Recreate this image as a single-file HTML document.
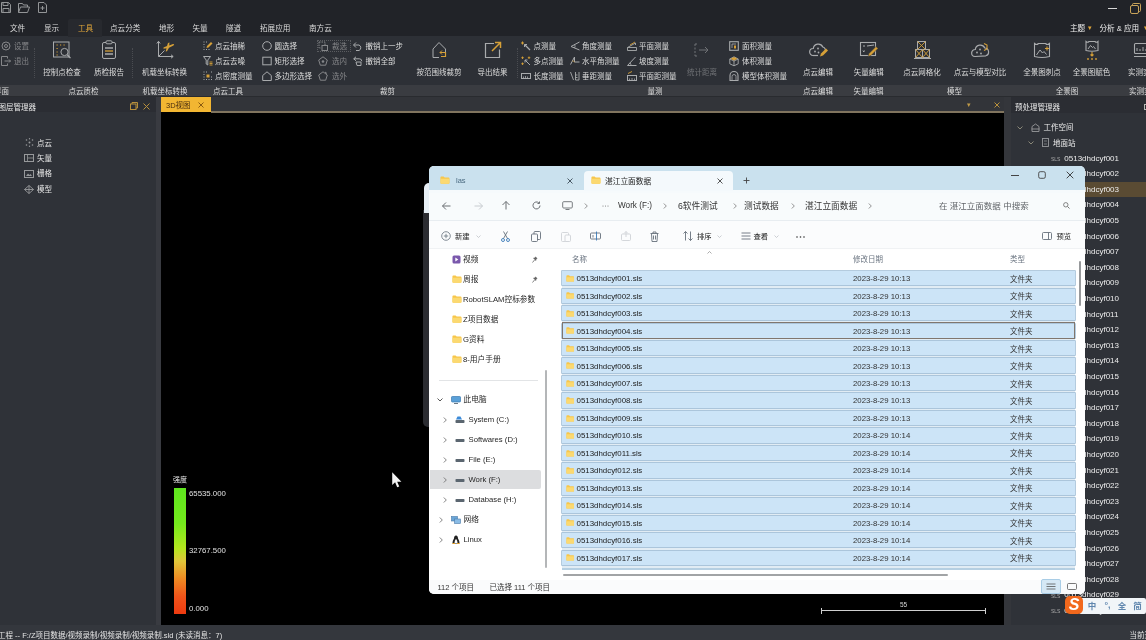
<!DOCTYPE html>
<html lang="zh-CN"><head><meta charset="utf-8"><title>3D视图</title>
<style>
html,body{margin:0;padding:0}
body{width:1146px;height:640px;overflow:hidden;position:relative;background:#000;font-family:"Liberation Sans","Noto Sans CJK SC",sans-serif;font-size:7.5px;-webkit-font-smoothing:antialiased}
#root{position:absolute;left:0;top:0;width:1146px;height:640px;overflow:hidden;will-change:transform}
.t{position:absolute;white-space:nowrap;display:block}
.b{position:absolute;display:block}
svg{overflow:visible}
</style></head><body>
<div id="root">
<div class="b" style="left:0.0px;top:0.0px;width:1146.0px;height:37.0px;background:#212328;"></div>
<div class="b" style="left:0.0px;top:36.0px;width:1146.0px;height:49.0px;background:#2d3036;"></div>
<div class="b" style="left:0.0px;top:85.0px;width:1146.0px;height:11.0px;background:#3a3c41;"></div>
<div class="b" style="left:0.0px;top:96.0px;width:1146.0px;height:1.0px;background:#292b2f;"></div>
<div class="b" style="left:0.0px;top:97.0px;width:1146.0px;height:15.5px;background:#2b2d33;"></div>
<div class="b" style="left:0.0px;top:112.0px;width:157.0px;height:513.0px;background:#2f3238;"></div>
<div class="b" style="left:155.5px;top:97.0px;width:5.5px;height:528.0px;background:#393b41;"></div>
<div class="b" style="left:161.0px;top:112.0px;width:843.0px;height:513.5px;background:#000;"></div>
<div class="b" style="left:161.0px;top:97.0px;width:843.0px;height:14.0px;background:#323439;"></div>
<div class="b" style="left:211.0px;top:111.0px;width:793.0px;height:2.0px;background:#80745e;"></div>
<div class="b" style="left:1004.0px;top:97.0px;width:7.0px;height:528.0px;background:#34363b;"></div>
<div class="b" style="left:1011.0px;top:112.5px;width:135.0px;height:512.5px;background:#2f3238;"></div>
<div class="b" style="left:1011.0px;top:97.0px;width:135.0px;height:15.5px;background:#2b2d33;"></div>
<div class="b" style="left:1144.0px;top:104.0px;width:3.0px;height:6.0px;background:transparent;border:1px solid #b9b9b4;box-sizing:border-box"></div>
<div class="b" style="left:0.0px;top:625.0px;width:1146.0px;height:15.0px;background:#34373d;"></div>
<svg class="b" style="left:1.0px;top:2.3px;" width="10" height="11" viewBox="0 0 10 11" fill="none"><path d="M0.5 0.5h7l2 2v8h-9z M2 0.5v3h5v-3 M2 10.5v-4h6v4" stroke="#939597" stroke-width="1"/></svg>
<svg class="b" style="left:18.0px;top:2.8px;" width="12" height="10" viewBox="0 0 12 10" fill="none"><path d="M0.5 9.5v-9h4l1 1.5h4v2 M0.5 9.5l2-5.5h9l-2 5.5z" stroke="#939597" stroke-width="1"/></svg>
<svg class="b" style="left:38.0px;top:2.3px;" width="9" height="11" viewBox="0 0 9 11" fill="none"><path d="M0.5 0.5h5.5l2.5 2.5v7.5h-8z M2.5 6h4 M4.5 4v4" stroke="#939597" stroke-width="1"/></svg>
<div class="b" style="left:1108.0px;top:8.0px;width:9.0px;height:1.0px;background:#d8d8d8;"></div>
<svg class="b" style="left:1130.0px;top:2.5px;" width="11" height="11" viewBox="0 0 11 11" fill="none"><rect x="0.5" y="2.5" width="8" height="8" rx="1.5" stroke="#c9a45a" stroke-width="1"/><path d="M2.5 2.5v-1a1 1 0 0 1 1-1h6a1 1 0 0 1 1 1v6a1 1 0 0 1-1 1h-1" stroke="#c9a45a" stroke-width="1"/></svg>
<div class="b" style="left:68.0px;top:19.0px;width:34.0px;height:18.0px;background:#27292e;border-radius:2px 2px 0 0"></div>
<span class="t" style="left:10.0px;top:23.0px;font-size:7.6px;line-height:12px;color:#dcdcdc;">文件</span>
<span class="t" style="left:44.0px;top:23.0px;font-size:7.6px;line-height:12px;color:#dcdcdc;">显示</span>
<span class="t" style="left:78.0px;top:23.0px;font-size:7.6px;line-height:12px;color:#e0a63a;">工具</span>
<span class="t" style="left:110.0px;top:23.0px;font-size:7.6px;line-height:12px;color:#dcdcdc;">点云分类</span>
<span class="t" style="left:159.0px;top:23.0px;font-size:7.6px;line-height:12px;color:#dcdcdc;">地形</span>
<span class="t" style="left:192.5px;top:23.0px;font-size:7.6px;line-height:12px;color:#dcdcdc;">矢量</span>
<span class="t" style="left:226.0px;top:23.0px;font-size:7.6px;line-height:12px;color:#dcdcdc;">隧道</span>
<span class="t" style="left:260.0px;top:23.0px;font-size:7.6px;line-height:12px;color:#dcdcdc;">拓展应用</span>
<span class="t" style="left:309.0px;top:23.0px;font-size:7.6px;line-height:12px;color:#dcdcdc;">南方云</span>
<span class="t" style="left:1070.0px;top:23.0px;font-size:7.6px;line-height:12px;color:#f0f0f0;">主题</span>
<span class="t" style="left:1088.0px;top:22.0px;font-size:7px;line-height:12px;color:#e0a63a;">▾</span>
<span class="t" style="left:1099.5px;top:23.0px;font-size:7.6px;line-height:12px;color:#f0f0f0;">分析 &amp; 应用</span>
<span class="t" style="left:1144.0px;top:22.0px;font-size:7px;line-height:12px;color:#e0a63a;">▾</span>
<svg class="b" style="left:1.0px;top:41.0px;" width="10" height="10" viewBox="0 0 10 10" fill="none"><circle cx="5" cy="5" r="4" stroke="#858689"/><circle cx="5" cy="5" r="1.500" stroke="#858689"/></svg>
<span class="t" style="left:14.0px;top:41.0px;font-size:7.5px;line-height:12px;color:#858689;">设置</span>
<svg class="b" style="left:1.0px;top:56.0px;" width="10" height="10" viewBox="0 0 10 10" fill="none"><path d="M6.500 2.500v-2h-6v9h6v-2" stroke="#858689"/><path d="M3.500 5h6M8 3.500l1.500 1.500-1.500 1.500" stroke="#858689"/></svg>
<span class="t" style="left:14.0px;top:56.0px;font-size:7.5px;line-height:12px;color:#858689;">退出</span>
<div class="b" style="left:34.0px;top:48.0px;width:1.0px;height:30.0px;background:transparent;border-left:1px dotted #4a4c51;width:0"></div>
<svg class="b" style="left:52.0px;top:40.0px;" width="20" height="20" viewBox="0 0 20 20" fill="none"><rect x="1.500" y="2" width="15.500" height="15" stroke="#a9abad"/><path d="M4.500 5h1.200M8 5h1.200M11.500 5h1.200M4.500 8.500h1.200M4.500 12h1.200M4.500 15h1.200" stroke="#d6a038" stroke-width="1.100"/><circle cx="12.500" cy="12" r="3.600" stroke="#a9abad" fill="#2d3036"/><path d="M15.200 14.800l3.300 3.300" stroke="#a9abad" stroke-width="1.300"/></svg>
<span class="t" style="left:-88.0px;width:300px;text-align:center;top:67.0px;font-size:7.5px;line-height:12px;color:#dcdcdc;">控制点检查</span>
<svg class="b" style="left:99.0px;top:40.0px;" width="20" height="20" viewBox="0 0 20 20" fill="none"><rect x="3.5" y="2.5" width="13" height="16" rx="1.5" stroke="#a9abad"/><rect x="7" y="0.8" width="6" height="3" rx="1" stroke="#a9abad" fill="#2d3036"/><path d="M6 8h8M6 14h8" stroke="#a9abad" stroke-width="1.3"/><path d="M6 11h8" stroke="#d6a038" stroke-width="1.3"/></svg>
<span class="t" style="left:-41.0px;width:300px;text-align:center;top:67.0px;font-size:7.5px;line-height:12px;color:#dcdcdc;">质检报告</span>
<div class="b" style="left:132.0px;top:48.0px;width:1.0px;height:30.0px;background:transparent;border-left:1px dotted #4a4c51;width:0"></div>
<svg class="b" style="left:154.5px;top:40.0px;" width="20" height="20" viewBox="0 0 20 20" fill="none"><path d="M3.500 1.500v15h14.500M1.800 3.500l1.700-2.200 1.700 2.200M16 14.800l2.200 1.700-2.200 1.700M3.500 16.500l6-6" stroke="#a9abad"/><path d="M8.500 7.500l3.500-1.500 1-3 1.500-.5-.3 3 3.800-1.500 1.200.3-.7 1.200-4.500 2.300-2 3.500-1.300.3.800-3.300-3 .5z" fill="#d6a038"/></svg>
<span class="t" style="left:14.5px;width:300px;text-align:center;top:67.0px;font-size:7.5px;line-height:12px;color:#dcdcdc;">机载坐标转换</span>
<svg class="b" style="left:202.5px;top:41.0px;" width="10" height="10" viewBox="0 0 10 10" fill="none"><path d="M0.500 1h1M3 1h1M0.500 3.500h1M0.500 6h1M0.500 8.500h1M3 8.500h1M5.500 8.500h1" stroke="#a9abad" stroke-width="1.200"/><path d="M3.500 7l.5-2 4-4 1.500 1.500-4 4z" fill="#d6a038"/></svg>
<span class="t" style="left:215.0px;top:41.0px;font-size:7.5px;line-height:12px;color:#dcdcdc;">点云抽稀</span>
<svg class="b" style="left:202.5px;top:56.0px;" width="10" height="10" viewBox="0 0 10 10" fill="none"><path d="M0.500 0.500h7l-2.700 3.500v5l-1.600-1v-4z" stroke="#a9abad"/><path d="M6.500 6h3M6.500 7.500h3M6.500 9h3" stroke="#d6a038" stroke-width=".9"/></svg>
<span class="t" style="left:215.0px;top:56.0px;font-size:7.5px;line-height:12px;color:#dcdcdc;">点云去噪</span>
<svg class="b" style="left:202.5px;top:71.0px;" width="10" height="10" viewBox="0 0 10 10" fill="none"><path d="M0.500 1h1M3 1h1M0.500 3.500h1M0.500 6h1M0.500 8.500h1M3 8.500h1M5.500 8.500h1M8 8.500h1M8 1h1M8 6h1" stroke="#a9abad" stroke-width="1.200"/><path d="M3.500 3.500h3v3h-3z" fill="#d6a038"/></svg>
<span class="t" style="left:215.0px;top:71.0px;font-size:7.5px;line-height:12px;color:#dcdcdc;">点密度测量</span>
<svg class="b" style="left:262.0px;top:41.0px;" width="10" height="10" viewBox="0 0 10 10" fill="none"><circle cx="5" cy="5" r="4.300" stroke="#a9abad"/></svg>
<span class="t" style="left:274.5px;top:41.0px;font-size:7.5px;line-height:12px;color:#dcdcdc;">圆选择</span>
<svg class="b" style="left:262.0px;top:56.0px;" width="10" height="10" viewBox="0 0 10 10" fill="none"><rect x="0.800" y="1.200" width="8.400" height="7.600" stroke="#a9abad"/></svg>
<span class="t" style="left:274.5px;top:56.0px;font-size:7.5px;line-height:12px;color:#dcdcdc;">矩形选择</span>
<svg class="b" style="left:262.0px;top:71.0px;" width="10" height="10" viewBox="0 0 10 10" fill="none"><path d="M5 0.800l4.300 3.700v5h-8.600v-5z" stroke="#a9abad"/></svg>
<span class="t" style="left:274.5px;top:71.0px;font-size:7.5px;line-height:12px;color:#dcdcdc;">多边形选择</span>
<svg class="b" style="left:318.0px;top:41.0px;" width="10" height="10" viewBox="0 0 10 10" fill="none"><path d="M1 1h6v3M1 1v6h2" stroke="#858689" stroke-dasharray="1.500 1"/><rect x="4" y="4.500" width="5.500" height="5" stroke="#858689"/></svg>
<span class="t" style="left:332.0px;top:41.0px;font-size:7.5px;line-height:12px;color:#858689;">裁选</span>
<svg class="b" style="left:318.0px;top:56.0px;" width="10" height="10" viewBox="0 0 10 10" fill="none"><path d="M5 0.800l4.300 3.200-1.600 5.200h-5.400l-1.600-5.200z" stroke="#858689"/><circle cx="5" cy="5.500" r="1.300" fill="#858689"/></svg>
<span class="t" style="left:332.0px;top:56.0px;font-size:7.5px;line-height:12px;color:#858689;">选内</span>
<svg class="b" style="left:318.0px;top:71.0px;" width="10" height="10" viewBox="0 0 10 10" fill="none"><path d="M5 0.800l4.300 3.200-1.600 5.200h-5.400l-1.600-5.200z" stroke="#858689"/><path d="M7 1l2 1.500" stroke="#858689"/></svg>
<span class="t" style="left:332.0px;top:71.0px;font-size:7.5px;line-height:12px;color:#858689;">选外</span>
<div class="b" style="left:317.0px;top:40.0px;width:34.0px;height:11.5px;background:transparent;border:1px dotted #5a5c60;box-sizing:border-box"></div>
<svg class="b" style="left:353.0px;top:41.0px;" width="10" height="10" viewBox="0 0 10 10" fill="none"><path d="M3 1.500l-2.500 2.500 2.500 2.500M0.800 4h5.200a3 3 0 0 1 0 5.500h-3" stroke="#a9abad"/></svg>
<span class="t" style="left:365.5px;top:41.0px;font-size:7.5px;line-height:12px;color:#dcdcdc;">撤销上一步</span>
<svg class="b" style="left:353.0px;top:56.0px;" width="10" height="10" viewBox="0 0 10 10" fill="none"><path d="M3 0.800l-2.300 2 2.300 2M0.800 2.800h5.500a2.500 2.500 0 0 1 2.500 2.500" stroke="#a9abad"/><path d="M3 6h5v3.500h-4z" stroke="#a9abad"/></svg>
<span class="t" style="left:365.5px;top:56.0px;font-size:7.5px;line-height:12px;color:#dcdcdc;">撤销全部</span>
<svg class="b" style="left:429.0px;top:40.0px;" width="20" height="20" viewBox="0 0 20 20" fill="none"><path d="M4 17.5v-8.5l6-6.5 6.500 6.5v3" stroke="#a9abad"/><path d="M4 17.5h6" stroke="#a9abad"/><path d="M11 12.5h5.500v4h-4.500" stroke="#d6a038" stroke-width="1.2"/><path d="M13 10.5l-2 2 2 2" stroke="#d6a038"/></svg>
<span class="t" style="left:289.0px;width:300px;text-align:center;top:67.0px;font-size:7.5px;line-height:12px;color:#dcdcdc;">按范围线裁剪</span>
<svg class="b" style="left:482.5px;top:40.0px;" width="20" height="20" viewBox="0 0 20 20" fill="none"><path d="M11 3.500h-8.500v14h14v-8" stroke="#a9abad" stroke-width="1.2"/><path d="M9 11l8.500-8.500M12 2.500h5.500v5.500" stroke="#d6a038" stroke-width="1.5"/></svg>
<span class="t" style="left:342.5px;width:300px;text-align:center;top:67.0px;font-size:7.5px;line-height:12px;color:#dcdcdc;">导出结果</span>
<div class="b" style="left:517.0px;top:48.0px;width:1.0px;height:30.0px;background:transparent;border-left:1px dotted #4a4c51;width:0"></div>
<svg class="b" style="left:520.5px;top:41.0px;" width="10" height="10" viewBox="0 0 10 10" fill="none"><path d="M1.500 0.500v3M0 2h3" stroke="#d6a038"/><path d="M3.500 3.500l5.500 5.500" stroke="#a9abad" stroke-width="1.300"/><path d="M3.500 6v-2.500h2.500" stroke="#a9abad"/></svg>
<span class="t" style="left:533.5px;top:41.0px;font-size:7.5px;line-height:12px;color:#dcdcdc;">点测量</span>
<svg class="b" style="left:520.5px;top:56.0px;" width="10" height="10" viewBox="0 0 10 10" fill="none"><path d="M1.500 0.500v2.500M0.300 1.700h2.500M8 0.500v2.500M6.800 1.700h2.500M1.500 6.500v2.500M0.300 7.700h2.500" stroke="#d6a038" stroke-width=".9"/><path d="M4 4l5 5M4 6.500v-2.500h2.500" stroke="#a9abad"/></svg>
<span class="t" style="left:533.5px;top:56.0px;font-size:7.5px;line-height:12px;color:#dcdcdc;">多点测量</span>
<svg class="b" style="left:520.5px;top:71.0px;" width="10" height="10" viewBox="0 0 10 10" fill="none"><rect x="0.500" y="2.500" width="9" height="5" stroke="#a9abad"/><path d="M2.500 7.500v-2M4.500 7.500v-2.500M6.500 7.500v-2" stroke="#a9abad" stroke-width=".8"/></svg>
<span class="t" style="left:533.5px;top:71.0px;font-size:7.5px;line-height:12px;color:#dcdcdc;">长度测量</span>
<svg class="b" style="left:570.0px;top:41.0px;" width="10" height="10" viewBox="0 0 10 10" fill="none"><path d="M9.500 1l-8.500 4.500 8.500 3.500" stroke="#a9abad"/><path d="M4.500 3.500a3 3 0 0 1 0 3.500" stroke="#a9abad" stroke-width=".8"/></svg>
<span class="t" style="left:582.0px;top:41.0px;font-size:7.5px;line-height:12px;color:#dcdcdc;">角度测量</span>
<svg class="b" style="left:570.0px;top:56.0px;" width="10" height="10" viewBox="0 0 10 10" fill="none"><path d="M0.500 8.500l4-7.500v5h5" stroke="#a9abad"/><path d="M2.500 5a2.500 2.500 0 0 1 2 1" stroke="#d6a038" stroke-width=".8"/></svg>
<span class="t" style="left:582.0px;top:56.0px;font-size:7.5px;line-height:12px;color:#dcdcdc;">水平角测量</span>
<svg class="b" style="left:570.0px;top:71.0px;" width="10" height="10" viewBox="0 0 10 10" fill="none"><path d="M0.500 1l3 8M5.500 1v8h3.500v-8M5.500 4h2M5.500 6.500h2" stroke="#a9abad" stroke-width=".9"/></svg>
<span class="t" style="left:582.0px;top:71.0px;font-size:7.5px;line-height:12px;color:#dcdcdc;">垂距测量</span>
<svg class="b" style="left:626.5px;top:41.0px;" width="10" height="10" viewBox="0 0 10 10" fill="none"><path d="M0.500 9.500v-3l8-4.500v2M0.500 6.500h9v3h-9" stroke="#a9abad" stroke-width=".9"/><path d="M3 4l5-3" stroke="#d6a038" stroke-width=".9"/></svg>
<span class="t" style="left:639.0px;top:41.0px;font-size:7.5px;line-height:12px;color:#dcdcdc;">平面测量</span>
<svg class="b" style="left:626.5px;top:56.0px;" width="10" height="10" viewBox="0 0 10 10" fill="none"><path d="M0.500 9.500l8-8.500M0.500 9.500h9" stroke="#a9abad"/><path d="M4 9.500a3.500 3.500 0 0 0-1-2.700" stroke="#a9abad" stroke-width=".8"/></svg>
<span class="t" style="left:639.0px;top:56.0px;font-size:7.5px;line-height:12px;color:#dcdcdc;">坡度测量</span>
<svg class="b" style="left:626.5px;top:71.0px;" width="10" height="10" viewBox="0 0 10 10" fill="none"><rect x="0.500" y="4.500" width="9" height="5" stroke="#a9abad"/><path d="M2.500 9.500v-2M5 9.500v-2.500M7.500 9.500v-2" stroke="#a9abad" stroke-width=".8"/><path d="M1 2.500l4-2" stroke="#d6a038" stroke-width=".9"/></svg>
<span class="t" style="left:639.0px;top:71.0px;font-size:7.5px;line-height:12px;color:#dcdcdc;">平面距测量</span>
<svg class="b" style="left:692.0px;top:40.0px;" width="20" height="20" viewBox="0 0 20 20" fill="none"><path d="M3 4v12M3 4h3M3 16h3" stroke="#707276" stroke-dasharray="2 1.5"/><path d="M7 10h9M13 7l3 3-3 3" stroke="#707276"/></svg>
<span class="t" style="left:552.0px;width:300px;text-align:center;top:67.0px;font-size:7.5px;line-height:12px;color:#707276;">统计距离</span>
<svg class="b" style="left:729.0px;top:41.0px;" width="10" height="10" viewBox="0 0 10 10" fill="none"><rect x="0.700" y="0.700" width="8.600" height="8.600" stroke="#a9abad" stroke-width="1.100"/><path d="M3 3h4M3 3v4" stroke="#a9abad" stroke-width=".8"/><path d="M5 4.500h2v3h-2z" fill="#d6a038"/></svg>
<span class="t" style="left:742.0px;top:41.0px;font-size:7.5px;line-height:12px;color:#dcdcdc;">面积测量</span>
<svg class="b" style="left:729.0px;top:56.0px;" width="10" height="10" viewBox="0 0 10 10" fill="none"><path d="M0.800 3l4.200-2.200 4.200 2.200v4.800l-4.200 2-4.200-2zM0.800 3l4.200 2 4.200-2M5 5v4.800" stroke="#a9abad" stroke-width=".9"/><path d="M1.500 2.800l3.500-1.800 3.500 1.800-3.500 1.700z" fill="#d6a038"/></svg>
<span class="t" style="left:742.0px;top:56.0px;font-size:7.5px;line-height:12px;color:#dcdcdc;">体积测量</span>
<svg class="b" style="left:729.0px;top:71.0px;" width="10" height="10" viewBox="0 0 10 10" fill="none"><path d="M1 9.500v-5a4 4 0 0 1 8 0v5z" stroke="#a9abad" stroke-width="1.100"/><path d="M3 9v-3.500a2 2 0 0 1 4 0v3.500" stroke="#a9abad" stroke-width=".8"/></svg>
<span class="t" style="left:742.0px;top:71.0px;font-size:7.5px;line-height:12px;color:#dcdcdc;">模型体积测量</span>
<svg class="b" style="left:808.0px;top:40.0px;" width="20" height="20" viewBox="0 0 20 20" fill="none"><path d="M5 15.500a3.500 3.500 0 0 1 .3-7 5 5 0 0 1 9.500-1.500 4 4 0 0 1 2.700 5" stroke="#a9abad" stroke-width="1.2"/><path d="M5 15.500h5" stroke="#a9abad" stroke-width="1.2"/><circle cx="7" cy="11.500" r=".9" fill="#a9abad"/><circle cx="10" cy="8.500" r=".9" fill="#a9abad"/><circle cx="10.500" cy="12.500" r=".9" fill="#a9abad"/><path d="M12 16.500l1-3 5-5 2 2-5 5z" fill="#d6a038"/></svg>
<span class="t" style="left:668.0px;width:300px;text-align:center;top:67.0px;font-size:7.5px;line-height:12px;color:#dcdcdc;">点云编辑</span>
<svg class="b" style="left:858.7px;top:40.0px;" width="20" height="20" viewBox="0 0 20 20" fill="none"><rect x="1.500" y="2.500" width="15" height="13" stroke="#a9abad" stroke-width="1.100"/><path d="M4 6h2M4 12l1.500-1.500M4 10.500l1.500 1.500" stroke="#a9abad"/><path d="M9 16.500l1-3 7-7 2 2-7 7z" fill="#d6a038" stroke="#2d3036" stroke-width=".5"/><path d="M8 6l7-1" stroke="#a9abad"/></svg>
<span class="t" style="left:718.7px;width:300px;text-align:center;top:67.0px;font-size:7.5px;line-height:12px;color:#dcdcdc;">矢量编辑</span>
<svg class="b" style="left:912.0px;top:40.0px;" width="20" height="20" viewBox="0 0 20 20" fill="none"><rect x="5.500" y="1.500" width="8" height="8" stroke="#a9abad"/><rect x="3.500" y="9.500" width="7" height="8" stroke="#a9abad"/><rect x="10.500" y="9.500" width="7" height="8" stroke="#a9abad"/><path d="M5.500 1.500l8 8M13.500 1.500l-8 8M3.500 9.500l7 8M10.500 9.500l-7 8M10.500 9.500l7 8M17.500 9.500l-7 8" stroke="#d6a038" stroke-width=".9"/><path d="M2 18.500h17" stroke="#a9abad"/></svg>
<span class="t" style="left:772.0px;width:300px;text-align:center;top:67.0px;font-size:7.5px;line-height:12px;color:#dcdcdc;">点云网格化</span>
<svg class="b" style="left:970.0px;top:40.0px;" width="20" height="20" viewBox="0 0 20 20" fill="none"><path d="M5 16.500a3.500 3.500 0 0 1 .3-7 5 5 0 0 1 9.500-1.500 4 4 0 0 1 1 7.800z" stroke="#a9abad" stroke-width="1.200"/><circle cx="7" cy="12.500" r=".9" fill="#a9abad"/><circle cx="10" cy="9.500" r=".9" fill="#a9abad"/><circle cx="11" cy="13.500" r=".9" fill="#a9abad"/><path d="M14 3.500l3 1.500v4l-3 1.500" stroke="#d6a038" stroke-width="1.100"/></svg>
<span class="t" style="left:830.0px;width:300px;text-align:center;top:67.0px;font-size:7.5px;line-height:12px;color:#dcdcdc;">点云与模型对比</span>
<svg class="b" style="left:1032.0px;top:40.0px;" width="20" height="20" viewBox="0 0 20 20" fill="none"><path d="M2.500 3.500q2 2 4 0h7q2 2 4 0v13q-7.500 2-15 0z" stroke="#a9abad" stroke-width="1.100"/><path d="M4.500 15l3.500-5 2.500 3 1.500-1.500 2.500 3" stroke="#a9abad"/><path d="M13 8.500h4M15 6.500v4" stroke="#d6a038" stroke-width="1.100"/></svg>
<span class="t" style="left:892.0px;width:300px;text-align:center;top:67.0px;font-size:7.5px;line-height:12px;color:#dcdcdc;">全景图刺点</span>
<svg class="b" style="left:1081.5px;top:40.0px;" width="20" height="20" viewBox="0 0 20 20" fill="none"><path d="M4 1.500q1.500 1.500 3 0h6q1.500 1.500 3 0v9q-6 1.500-12 0z" stroke="#a9abad" stroke-width="1.100"/><path d="M6 9l2.500-3.500 2 2 1-1 2 2.500" stroke="#a9abad"/><path d="M10 12v4M8.500 14.500l1.500 1.500 1.500-1.500" stroke="#d6a038" stroke-width="1.100"/><circle cx="6" cy="19" r=".9" fill="#d6a038"/><circle cx="10" cy="19" r=".9" fill="#d6a038"/><circle cx="14" cy="19" r=".9" fill="#d6a038"/></svg>
<span class="t" style="left:941.5px;width:300px;text-align:center;top:67.0px;font-size:7.5px;line-height:12px;color:#dcdcdc;">全景图赋色</span>
<svg class="b" style="left:1133.0px;top:40.0px;" width="20" height="20" viewBox="0 0 20 20" fill="none"><rect x="1.500" y="3.500" width="17" height="10" rx="1" stroke="#a9abad" stroke-width="1.100"/><path d="M4 11v-3M7 11v-2M10 11v-4M13 11v-2" stroke="#a9abad"/><path d="M1 16.500h18" stroke="#a9abad"/></svg>
<span class="t" style="left:993.0px;width:300px;text-align:center;top:67.0px;font-size:7.5px;line-height:12px;color:#dcdcdc;">实测实量</span>
<span class="t" style="left:-291.0px;width:300px;text-align:right;top:86.0px;font-size:7.5px;line-height:12px;color:#dcdcdc;">界面</span>
<span class="t" style="left:-66.5px;width:300px;text-align:center;top:86.0px;font-size:7.5px;line-height:12px;color:#dcdcdc;">点云质检</span>
<span class="t" style="left:15.0px;width:300px;text-align:center;top:86.0px;font-size:7.5px;line-height:12px;color:#dcdcdc;">机载坐标转换</span>
<span class="t" style="left:78.0px;width:300px;text-align:center;top:86.0px;font-size:7.5px;line-height:12px;color:#dcdcdc;">点云工具</span>
<span class="t" style="left:237.5px;width:300px;text-align:center;top:86.0px;font-size:7.5px;line-height:12px;color:#dcdcdc;">裁剪</span>
<span class="t" style="left:505.0px;width:300px;text-align:center;top:86.0px;font-size:7.5px;line-height:12px;color:#dcdcdc;">量测</span>
<span class="t" style="left:668.0px;width:300px;text-align:center;top:86.0px;font-size:7.5px;line-height:12px;color:#dcdcdc;">点云编辑</span>
<span class="t" style="left:718.5px;width:300px;text-align:center;top:86.0px;font-size:7.5px;line-height:12px;color:#dcdcdc;">矢量编辑</span>
<span class="t" style="left:804.5px;width:300px;text-align:center;top:86.0px;font-size:7.5px;line-height:12px;color:#dcdcdc;">模型</span>
<span class="t" style="left:917.0px;width:300px;text-align:center;top:86.0px;font-size:7.5px;line-height:12px;color:#dcdcdc;">全景图</span>
<span class="t" style="left:994.0px;width:300px;text-align:center;top:86.0px;font-size:7.5px;line-height:12px;color:#dcdcdc;">实测实量</span>
<span class="t" style="left:-1.5px;top:102.0px;font-size:7.5px;line-height:12px;color:#e8e8e8;">图层管理器</span>
<svg class="b" style="left:129.5px;top:102.0px;" width="8" height="8" viewBox="0 0 8 8" fill="none"><rect x="0.500" y="2" width="5.500" height="5.500" stroke="#b8903c"/><path d="M2 2v-1.500h5.500v5.500h-1.500" stroke="#b8903c"/></svg>
<svg class="b" style="left:142.5px;top:102.5px;" width="7" height="7" viewBox="0 0 7 7" fill="none"><path d="M0.500 0.500l6 6M6.500 0.500l-6 6" stroke="#b8903c" stroke-width="1"/></svg>
<div class="b" style="left:161.0px;top:97.0px;width:50.0px;height:15.0px;background:#f2b632;"></div>
<span class="t" style="left:166.0px;top:100.0px;font-size:7.5px;line-height:12px;color:#4a2e10;">3D视图</span>
<svg class="b" style="left:197.5px;top:101.5px;" width="6" height="6" viewBox="0 0 6 6" fill="none"><path d="M0.500 0.500l5 5M5.500 0.500l-5 5" stroke="#8a5a10" stroke-width="1"/></svg>
<span class="t" style="left:819.0px;width:300px;text-align:center;top:99.0px;font-size:6.5px;line-height:12px;color:#c09a48;">▾</span>
<svg class="b" style="left:993.5px;top:101.5px;" width="6" height="6" viewBox="0 0 6 6" fill="none"><path d="M0.500 0.500l5 5M5.500 0.500l-5 5" stroke="#b8903c" stroke-width="1"/></svg>
<span class="t" style="left:1015.0px;top:102.0px;font-size:7.5px;line-height:12px;color:#e8e8e8;">预处理管理器</span>
<svg class="b" style="left:24.5px;top:138.0px;" width="9" height="9" viewBox="0 0 9 9" fill="none"><circle cx="4.500" cy="4.500" r="1" fill="#97999b"/><circle cx="1.500" cy="2" r=".8" fill="#97999b"/><circle cx="7.500" cy="2" r=".8" fill="#97999b"/><circle cx="1.500" cy="7" r=".8" fill="#97999b"/><circle cx="7.500" cy="7" r=".8" fill="#97999b"/><circle cx="4.500" cy="0.800" r=".7" fill="#97999b"/><circle cx="4.500" cy="8.200" r=".7" fill="#97999b"/></svg>
<span class="t" style="left:37.0px;top:138.0px;font-size:7.5px;line-height:12px;color:#e4e4e4;">点云</span>
<svg class="b" style="left:24.0px;top:154.0px;" width="10" height="8" viewBox="0 0 10 8" fill="none"><rect x="0.500" y="0.500" width="9" height="7" stroke="#97999b"/><path d="M3.500 0.500v7M3.500 4h6" stroke="#97999b" stroke-width=".8"/></svg>
<span class="t" style="left:37.0px;top:153.0px;font-size:7.5px;line-height:12px;color:#e4e4e4;">矢量</span>
<svg class="b" style="left:24.0px;top:169.5px;" width="10" height="8" viewBox="0 0 10 8" fill="none"><rect x="0.500" y="0.500" width="9" height="7" stroke="#97999b"/><path d="M2 6l2-2.500 1.500 1.500 1-1 1.500 2z" fill="#97999b"/></svg>
<span class="t" style="left:37.0px;top:168.0px;font-size:7.5px;line-height:12px;color:#e4e4e4;">栅格</span>
<svg class="b" style="left:24.0px;top:184.5px;" width="10" height="9" viewBox="0 0 10 9" fill="none"><path d="M5 0.500l4.500 4-4.500 4-4.500-4zM0.500 4.500h9M5 0.500v8" stroke="#97999b" stroke-width=".9"/></svg>
<span class="t" style="left:37.0px;top:184.0px;font-size:7.5px;line-height:12px;color:#e4e4e4;">模型</span>
<span class="t" style="left:173.0px;top:474.0px;font-size:7px;line-height:12px;color:#e8e8e8;">强度</span>
<div class="b" style="left:173.5px;top:488.0px;width:12.5px;height:125.5px;background:linear-gradient(to bottom,#5ee61e 0%,#74ea1c 28%,#b4e61e 48%,#e0c63a 58%,#ee8a22 72%,#f0541a 86%,#ee3a10 100%);"></div>
<span class="t" style="left:189.0px;top:488.0px;font-size:7.8px;line-height:12px;color:#e0e0e0;">65535.000</span>
<span class="t" style="left:189.0px;top:545.0px;font-size:7.8px;line-height:12px;color:#e0e0e0;">32767.500</span>
<span class="t" style="left:189.0px;top:603.0px;font-size:7.8px;line-height:12px;color:#e0e0e0;">0.000</span>
<svg class="b" style="left:392.0px;top:472.0px;" width="10.8" height="17.2" viewBox="0 0 10.8 17.2" fill="none"><path transform="scale(1.08)" d="M0.200 0.300v11.800l2.700-2.500 1.900 4.600 1.900-.8-1.900-4.400h3.900z" fill="#f4f4f4"/></svg>
<div class="b" style="left:820.5px;top:610.0px;width:165.0px;height:1.0px;background:#d0d0d0;"></div>
<div class="b" style="left:820.5px;top:607.5px;width:1.0px;height:6.0px;background:#d0d0d0;"></div>
<div class="b" style="left:985.0px;top:607.5px;width:1.0px;height:6.0px;background:#d0d0d0;"></div>
<span class="t" style="left:753.5px;width:300px;text-align:center;top:599.0px;font-size:6.5px;line-height:12px;color:#d8d8d8;">55</span>
<svg class="b" style="left:1017.0px;top:125.5px;" width="6" height="4" viewBox="0 0 6 4" fill="none"><path d="M0.500 0.500l2.500 2.500 2.500-2.500" stroke="#8a8878"/></svg>
<svg class="b" style="left:1031.0px;top:123.0px;" width="9" height="9" viewBox="0 0 9 9" fill="none"><path d="M1 3.500l3.500-2.500 3.500 2.500v5h-7zM0.500 6h8" stroke="#97999b" stroke-width=".9"/></svg>
<span class="t" style="left:1043.5px;top:122.0px;font-size:7.5px;line-height:12px;color:#ececec;">工作空间</span>
<svg class="b" style="left:1028.0px;top:140.5px;" width="6" height="4" viewBox="0 0 6 4" fill="none"><path d="M0.500 0.500l2.500 2.500 2.500-2.500" stroke="#8a8878"/></svg>
<svg class="b" style="left:1041.5px;top:138.0px;" width="7" height="9" viewBox="0 0 7 9" fill="none"><rect x="0.500" y="0.500" width="6" height="8" stroke="#97999b" stroke-width=".9"/><path d="M2 3h3M2 6h3" stroke="#97999b" stroke-width=".7"/></svg>
<span class="t" style="left:1053.0px;top:138.0px;font-size:7.5px;line-height:12px;color:#ececec;">地面站</span>
<div class="b" style="left:1011.0px;top:182.0px;width:135.0px;height:14.5px;background:#5a4b33;"></div>
<span class="t" style="left:1051.0px;top:153.0px;font-size:5px;line-height:12px;color:#a8a8a8;">SLS</span>
<span class="t" style="left:1064.3px;top:153.0px;font-size:8px;line-height:12px;color:#ececec;">0513dhdcyf001</span>
<span class="t" style="left:1051.0px;top:168.0px;font-size:5px;line-height:12px;color:#a8a8a8;">SLS</span>
<span class="t" style="left:1064.3px;top:168.0px;font-size:8px;line-height:12px;color:#ececec;">0513dhdcyf002</span>
<span class="t" style="left:1051.0px;top:184.0px;font-size:5px;line-height:12px;color:#a8a8a8;">SLS</span>
<span class="t" style="left:1064.3px;top:184.0px;font-size:8px;line-height:12px;color:#ececec;">0513dhdcyf003</span>
<span class="t" style="left:1051.0px;top:200.0px;font-size:5px;line-height:12px;color:#a8a8a8;">SLS</span>
<span class="t" style="left:1064.3px;top:199.0px;font-size:8px;line-height:12px;color:#ececec;">0513dhdcyf004</span>
<span class="t" style="left:1051.0px;top:215.0px;font-size:5px;line-height:12px;color:#a8a8a8;">SLS</span>
<span class="t" style="left:1064.3px;top:215.0px;font-size:8px;line-height:12px;color:#ececec;">0513dhdcyf005</span>
<span class="t" style="left:1051.0px;top:231.0px;font-size:5px;line-height:12px;color:#a8a8a8;">SLS</span>
<span class="t" style="left:1064.3px;top:231.0px;font-size:8px;line-height:12px;color:#ececec;">0513dhdcyf006</span>
<span class="t" style="left:1051.0px;top:246.0px;font-size:5px;line-height:12px;color:#a8a8a8;">SLS</span>
<span class="t" style="left:1064.3px;top:246.0px;font-size:8px;line-height:12px;color:#ececec;">0513dhdcyf007</span>
<span class="t" style="left:1051.0px;top:262.0px;font-size:5px;line-height:12px;color:#a8a8a8;">SLS</span>
<span class="t" style="left:1064.3px;top:262.0px;font-size:8px;line-height:12px;color:#ececec;">0513dhdcyf008</span>
<span class="t" style="left:1051.0px;top:278.0px;font-size:5px;line-height:12px;color:#a8a8a8;">SLS</span>
<span class="t" style="left:1064.3px;top:277.0px;font-size:8px;line-height:12px;color:#ececec;">0513dhdcyf009</span>
<span class="t" style="left:1051.0px;top:293.0px;font-size:5px;line-height:12px;color:#a8a8a8;">SLS</span>
<span class="t" style="left:1064.3px;top:293.0px;font-size:8px;line-height:12px;color:#ececec;">0513dhdcyf010</span>
<span class="t" style="left:1051.0px;top:309.0px;font-size:5px;line-height:12px;color:#a8a8a8;">SLS</span>
<span class="t" style="left:1064.3px;top:309.0px;font-size:8px;line-height:12px;color:#ececec;">0513dhdcyf011</span>
<span class="t" style="left:1051.0px;top:325.0px;font-size:5px;line-height:12px;color:#a8a8a8;">SLS</span>
<span class="t" style="left:1064.3px;top:324.0px;font-size:8px;line-height:12px;color:#ececec;">0513dhdcyf012</span>
<span class="t" style="left:1051.0px;top:340.0px;font-size:5px;line-height:12px;color:#a8a8a8;">SLS</span>
<span class="t" style="left:1064.3px;top:340.0px;font-size:8px;line-height:12px;color:#ececec;">0513dhdcyf013</span>
<span class="t" style="left:1051.0px;top:356.0px;font-size:5px;line-height:12px;color:#a8a8a8;">SLS</span>
<span class="t" style="left:1064.3px;top:355.0px;font-size:8px;line-height:12px;color:#ececec;">0513dhdcyf014</span>
<span class="t" style="left:1051.0px;top:371.0px;font-size:5px;line-height:12px;color:#a8a8a8;">SLS</span>
<span class="t" style="left:1064.3px;top:371.0px;font-size:8px;line-height:12px;color:#ececec;">0513dhdcyf015</span>
<span class="t" style="left:1051.0px;top:387.0px;font-size:5px;line-height:12px;color:#a8a8a8;">SLS</span>
<span class="t" style="left:1064.3px;top:387.0px;font-size:8px;line-height:12px;color:#ececec;">0513dhdcyf016</span>
<span class="t" style="left:1051.0px;top:403.0px;font-size:5px;line-height:12px;color:#a8a8a8;">SLS</span>
<span class="t" style="left:1064.3px;top:402.0px;font-size:8px;line-height:12px;color:#ececec;">0513dhdcyf017</span>
<span class="t" style="left:1051.0px;top:418.0px;font-size:5px;line-height:12px;color:#a8a8a8;">SLS</span>
<span class="t" style="left:1064.3px;top:418.0px;font-size:8px;line-height:12px;color:#ececec;">0513dhdcyf018</span>
<span class="t" style="left:1051.0px;top:434.0px;font-size:5px;line-height:12px;color:#a8a8a8;">SLS</span>
<span class="t" style="left:1064.3px;top:433.0px;font-size:8px;line-height:12px;color:#ececec;">0513dhdcyf019</span>
<span class="t" style="left:1051.0px;top:449.0px;font-size:5px;line-height:12px;color:#a8a8a8;">SLS</span>
<span class="t" style="left:1064.3px;top:449.0px;font-size:8px;line-height:12px;color:#ececec;">0513dhdcyf020</span>
<span class="t" style="left:1051.0px;top:465.0px;font-size:5px;line-height:12px;color:#a8a8a8;">SLS</span>
<span class="t" style="left:1064.3px;top:465.0px;font-size:8px;line-height:12px;color:#ececec;">0513dhdcyf021</span>
<span class="t" style="left:1051.0px;top:480.0px;font-size:5px;line-height:12px;color:#a8a8a8;">SLS</span>
<span class="t" style="left:1064.3px;top:480.0px;font-size:8px;line-height:12px;color:#ececec;">0513dhdcyf022</span>
<span class="t" style="left:1051.0px;top:496.0px;font-size:5px;line-height:12px;color:#a8a8a8;">SLS</span>
<span class="t" style="left:1064.3px;top:496.0px;font-size:8px;line-height:12px;color:#ececec;">0513dhdcyf023</span>
<span class="t" style="left:1051.0px;top:512.0px;font-size:5px;line-height:12px;color:#a8a8a8;">SLS</span>
<span class="t" style="left:1064.3px;top:511.0px;font-size:8px;line-height:12px;color:#ececec;">0513dhdcyf024</span>
<span class="t" style="left:1051.0px;top:527.0px;font-size:5px;line-height:12px;color:#a8a8a8;">SLS</span>
<span class="t" style="left:1064.3px;top:527.0px;font-size:8px;line-height:12px;color:#ececec;">0513dhdcyf025</span>
<span class="t" style="left:1051.0px;top:543.0px;font-size:5px;line-height:12px;color:#a8a8a8;">SLS</span>
<span class="t" style="left:1064.3px;top:543.0px;font-size:8px;line-height:12px;color:#ececec;">0513dhdcyf026</span>
<span class="t" style="left:1051.0px;top:558.0px;font-size:5px;line-height:12px;color:#a8a8a8;">SLS</span>
<span class="t" style="left:1064.3px;top:558.0px;font-size:8px;line-height:12px;color:#ececec;">0513dhdcyf027</span>
<span class="t" style="left:1051.0px;top:574.0px;font-size:5px;line-height:12px;color:#a8a8a8;">SLS</span>
<span class="t" style="left:1064.3px;top:574.0px;font-size:8px;line-height:12px;color:#ececec;">0513dhdcyf028</span>
<span class="t" style="left:1051.0px;top:590.0px;font-size:5px;line-height:12px;color:#a8a8a8;">SLS</span>
<span class="t" style="left:1064.3px;top:589.0px;font-size:8px;line-height:12px;color:#ececec;">0513dhdcyf029</span>
<span class="t" style="left:1051.0px;top:605.0px;font-size:5px;line-height:12px;color:#a8a8a8;">SLS</span>
<span class="t" style="left:1064.3px;top:605.0px;font-size:8px;line-height:12px;color:#ececec;">0513dhdcyf030</span>
<span class="t" style="left:-2.0px;top:630.0px;font-size:7.5px;line-height:12px;color:#e4e4e4;">工程 -- F:/Z项目数据/视频录制/视频录制/视频录制.sld (未读消息：7)</span>
<span class="t" style="left:1129.5px;top:630.0px;font-size:7.5px;line-height:12px;color:#e4e4e4;">当前进度</span>
<div class="b" style="left:423.0px;top:210.0px;width:7.0px;height:217.0px;background:#2b2c31;border-radius:0 0 0 5px"></div>
<div class="b" style="left:424.0px;top:182.5px;width:8.0px;height:30.0px;background:#e6eef4;border-radius:5px 0 0 0"></div>
<div class="b" style="left:429px;top:166px;width:656px;height:428px;background:#fff;border-radius:5px;overflow:hidden">
<div class="b" style="left:0.0px;top:0.0px;width:656.0px;height:24.0px;background:#cae1ee;"></div>
<div class="b" style="left:0.0px;top:24.0px;width:656.0px;height:3.0px;background:#f6fafc;"></div>
<div class="b" style="left:0.0px;top:26.5px;width:656.0px;height:28.0px;background:#f8fbfc;"></div>
<div class="b" style="left:0.0px;top:54.0px;width:656.0px;height:1.0px;background:#e8edf1;"></div>
<div class="b" style="left:0.0px;top:55.3px;width:656.0px;height:28.0px;background:#fbfcfd;"></div>
<div class="b" style="left:0.0px;top:82.0px;width:656.0px;height:1.0px;background:#f0f2f4;"></div>
<svg class="b" style="left:11.1px;top:9.9px;" width="9.9" height="8.2" viewBox="0 0 9.9 8.2" fill="none"><g transform="scale(0.9,0.82)"><path d="M0.500 1.500a1 1 0 0 1 1-1h2.500l1.200 1.300h4.300a1 1 0 0 1 1 1v5.700a1 1 0 0 1-1 1h-8a1 1 0 0 1-1-1z" fill="#f7c64b"/><path d="M0.500 3.300h10v5.200a1 1 0 0 1-1 1h-8a1 1 0 0 1-1-1z" fill="#fbd971"/></g></svg>
<span class="t" style="left:27.0px;top:9.0px;font-size:7.5px;line-height:12px;color:#4a6a80;">las</span>
<svg class="b" style="left:138.0px;top:11.5px;" width="6" height="6" viewBox="0 0 6 6" fill="none"><path d="M0.500 0.500l5 5M5.500 0.500l-5 5" stroke="#3a4a55" stroke-width=".9"/></svg>
<div class="b" style="left:155.0px;top:4.5px;width:149.0px;height:20.0px;background:#f4f9fc;border-radius:4px 4px 0 0"></div>
<svg class="b" style="left:161.6px;top:9.9px;" width="9.9" height="8.2" viewBox="0 0 9.9 8.2" fill="none"><g transform="scale(0.9,0.82)"><path d="M0.500 1.500a1 1 0 0 1 1-1h2.500l1.200 1.300h4.300a1 1 0 0 1 1 1v5.700a1 1 0 0 1-1 1h-8a1 1 0 0 1-1-1z" fill="#f7c64b"/><path d="M0.500 3.300h10v5.200a1 1 0 0 1-1 1h-8a1 1 0 0 1-1-1z" fill="#fbd971"/></g></svg>
<span class="t" style="left:176.0px;top:10.0px;font-size:7.7px;line-height:12px;color:#1a1a1a;">湛江立面数据</span>
<svg class="b" style="left:287.5px;top:11.5px;" width="6" height="6" viewBox="0 0 6 6" fill="none"><path d="M0.500 0.500l5 5M5.500 0.500l-5 5" stroke="#444" stroke-width=".9"/></svg>
<svg class="b" style="left:314.0px;top:11.0px;" width="7" height="7" viewBox="0 0 7 7" fill="none"><path d="M3.500 0.500v6M0.500 3.500h6" stroke="#444" stroke-width=".9"/></svg>
<div class="b" style="left:581.5px;top:8.5px;width:8.0px;height:0.9px;background:#444;"></div>
<svg class="b" style="left:609.0px;top:4.5px;" width="8" height="8" viewBox="0 0 8 8" fill="none"><rect x="0.700" y="0.700" width="6.600" height="6.600" rx="1.500" stroke="#444" stroke-width=".9"/></svg>
<svg class="b" style="left:637.0px;top:4.5px;" width="8" height="8" viewBox="0 0 8 8" fill="none"><path d="M0.700 0.700l6.600 6.600M7.300 0.700l-6.600 6.600" stroke="#333" stroke-width=".9"/></svg>
<svg class="b" style="left:12.5px;top:35.5px;" width="9" height="8" viewBox="0 0 9 8" fill="none"><path d="M8.500 4h-8M4 0.500l-3.500 3.500 3.500 3.500" stroke="#6a6e73" stroke-width="1"/></svg>
<svg class="b" style="left:44.5px;top:35.5px;" width="9" height="8" viewBox="0 0 9 8" fill="none"><path d="M0.500 4h8M5 0.500l3.500 3.500-3.500 3.500" stroke="#c8ccd0" stroke-width="1"/></svg>
<svg class="b" style="left:72.5px;top:35.0px;" width="8" height="9" viewBox="0 0 8 9" fill="none"><path d="M4 8.500v-8M0.500 4l3.500-3.500 3.500 3.500" stroke="#6a6e73" stroke-width="1"/></svg>
<svg class="b" style="left:103.0px;top:35.0px;" width="9" height="9" viewBox="0 0 9 9" fill="none"><path d="M8 4.500a3.500 3.500 0 1 1-1.200-2.700M7.500 0.500v2h-2" stroke="#6a6e73" stroke-width="1"/></svg>
<svg class="b" style="left:133.0px;top:35.0px;" width="11" height="9" viewBox="0 0 11 9" fill="none"><rect x="0.700" y="0.700" width="9.600" height="6.300" rx="1" stroke="#6a6e73" stroke-width=".9"/><path d="M3.500 8.500h4" stroke="#6a6e73" stroke-width=".9"/></svg>
<svg class="b" style="left:155.0px;top:36.5px;" width="4" height="6" viewBox="0 0 4 6" fill="none"><path d="M0.800 0.500l2.500 2.500-2.500 2.500" stroke="#777" stroke-width=".8"/></svg>
<svg class="b" style="left:172.5px;top:39.0px;" width="7" height="2" viewBox="0 0 7 2" fill="none"><circle cx="1" cy="1" r=".6" fill="#777"/><circle cx="3.500" cy="1" r=".6" fill="#777"/><circle cx="6" cy="1" r=".6" fill="#777"/></svg>
<span class="t" style="left:189.0px;top:34.0px;font-size:8.2px;line-height:12px;color:#333;">Work (F:)</span>
<svg class="b" style="left:233.5px;top:36.5px;" width="4" height="6" viewBox="0 0 4 6" fill="none"><path d="M0.800 0.500l2.500 2.500-2.500 2.500" stroke="#777" stroke-width=".8"/></svg>
<span class="t" style="left:249.0px;top:34.0px;font-size:8.7px;line-height:12px;color:#333;">6软件测试</span>
<svg class="b" style="left:304.0px;top:36.5px;" width="4" height="6" viewBox="0 0 4 6" fill="none"><path d="M0.800 0.500l2.500 2.500-2.500 2.500" stroke="#777" stroke-width=".8"/></svg>
<span class="t" style="left:315.0px;top:34.0px;font-size:8.7px;line-height:12px;color:#333;">测试数据</span>
<svg class="b" style="left:361.5px;top:36.5px;" width="4" height="6" viewBox="0 0 4 6" fill="none"><path d="M0.800 0.500l2.500 2.500-2.500 2.500" stroke="#777" stroke-width=".8"/></svg>
<span class="t" style="left:376.0px;top:34.0px;font-size:8.7px;line-height:12px;color:#333;">湛江立面数据</span>
<svg class="b" style="left:439.0px;top:36.5px;" width="4" height="6" viewBox="0 0 4 6" fill="none"><path d="M0.800 0.500l2.500 2.500-2.500 2.500" stroke="#777" stroke-width=".8"/></svg>
<span class="t" style="left:510.0px;top:34.0px;font-size:8.5px;line-height:12px;color:#606468;">在 湛江立面数据 中搜索</span>
<svg class="b" style="left:633.5px;top:36.0px;" width="7" height="7" viewBox="0 0 7 7" fill="none"><circle cx="2.800" cy="2.800" r="2.200" stroke="#666" stroke-width=".8"/><path d="M4.500 4.500l2 2" stroke="#666" stroke-width=".9"/></svg>
<svg class="b" style="left:11.5px;top:65.0px;" width="10" height="10" viewBox="0 0 10 10" fill="none"><circle cx="5" cy="5" r="4.300" stroke="#66717c" stroke-width=".8"/><path d="M5 2.800v4.400M2.800 5h4.400" stroke="#66717c" stroke-width=".8"/></svg>
<span class="t" style="left:26.0px;top:65.0px;font-size:7.3px;line-height:12px;color:#222;">新建</span>
<svg class="b" style="left:47.0px;top:69.0px;" width="5" height="3" viewBox="0 0 5 3" fill="none"><path d="M0.500 0.500l2 2 2-2" stroke="#b8bcc0" stroke-width=".7"/></svg>
<svg class="b" style="left:72.0px;top:64.5px;" width="9" height="11" viewBox="0 0 9 11" fill="none"><path d="M2.500 0.500l4 7M6.500 0.500l-4 7" stroke="#66717c" stroke-width=".9"/><circle cx="2" cy="9" r="1.500" stroke="#3a7ab8" stroke-width=".9"/><circle cx="7" cy="9" r="1.500" stroke="#3a7ab8" stroke-width=".9"/></svg>
<svg class="b" style="left:101.5px;top:64.5px;" width="10" height="11" viewBox="0 0 10 11" fill="none"><rect x="0.500" y="3" width="6" height="7.500" rx="1" stroke="#66717c" stroke-width=".9"/><path d="M3 3v-1.500a1 1 0 0 1 1-1h4.500a1 1 0 0 1 1 1v6a1 1 0 0 1-1 1h-2" stroke="#66717c" stroke-width=".9"/></svg>
<svg class="b" style="left:131.5px;top:64.5px;" width="10" height="11" viewBox="0 0 10 11" fill="none"><rect x="0.500" y="1.500" width="7" height="9" rx="1" stroke="#cfd3d7" stroke-width=".9"/><rect x="4" y="4" width="5.500" height="6.500" rx="1" stroke="#cfd3d7" stroke-width=".9" fill="#fbfcfd"/></svg>
<svg class="b" style="left:161.0px;top:65.0px;" width="11" height="10" viewBox="0 0 11 10" fill="none"><rect x="0.500" y="2" width="10" height="6" rx="1" stroke="#66717c" stroke-width=".9"/><path d="M6.500 0.500v9" stroke="#3a7ab8" stroke-width=".9"/><path d="M3 4v2.500" stroke="#66717c" stroke-width=".9"/></svg>
<svg class="b" style="left:191.5px;top:65.0px;" width="10" height="10" viewBox="0 0 10 10" fill="none"><rect x="0.500" y="3" width="9" height="6.500" rx="1" stroke="#cfd3d7" stroke-width=".9"/><path d="M5 6v-5.500M3 2.500l2-2 2 2" stroke="#cfd3d7" stroke-width=".9"/></svg>
<svg class="b" style="left:221.0px;top:64.5px;" width="9" height="11" viewBox="0 0 9 11" fill="none"><path d="M0.500 2.500h8M3 2.500v-1.500h3v1.500M1.500 2.500l.5 8h5l.5-8M3.500 4.500v4M5.500 4.500v4" stroke="#66717c" stroke-width=".9"/></svg>
<svg class="b" style="left:253.5px;top:65.0px;" width="10" height="10" viewBox="0 0 10 10" fill="none"><path d="M2.500 9.500v-9M0.500 2.500l2-2 2 2M7.500 0.500v9M5.500 7.500l2 2 2-2" stroke="#66717c" stroke-width=".9"/></svg>
<span class="t" style="left:268.0px;top:65.0px;font-size:7.3px;line-height:12px;color:#222;">排序</span>
<svg class="b" style="left:288.0px;top:69.0px;" width="5" height="3" viewBox="0 0 5 3" fill="none"><path d="M0.500 0.500l2 2 2-2" stroke="#b8bcc0" stroke-width=".7"/></svg>
<svg class="b" style="left:311.5px;top:66.0px;" width="10" height="8" viewBox="0 0 10 8" fill="none"><path d="M0.500 1h9M0.500 4h9M0.500 7h9" stroke="#66717c" stroke-width=".9"/></svg>
<span class="t" style="left:324.5px;top:65.0px;font-size:7.3px;line-height:12px;color:#222;">查看</span>
<svg class="b" style="left:344.5px;top:69.0px;" width="5" height="3" viewBox="0 0 5 3" fill="none"><path d="M0.500 0.500l2 2 2-2" stroke="#b8bcc0" stroke-width=".7"/></svg>
<svg class="b" style="left:366.5px;top:69.5px;" width="9" height="2" viewBox="0 0 9 2" fill="none"><circle cx="1" cy="1" r=".8" fill="#333"/><circle cx="4.500" cy="1" r=".8" fill="#333"/><circle cx="8" cy="1" r=".8" fill="#333"/></svg>
<svg class="b" style="left:612.5px;top:66.0px;" width="10" height="8" viewBox="0 0 10 8" fill="none"><rect x="0.500" y="0.500" width="9" height="7" rx="1" stroke="#66717c" stroke-width=".9"/><path d="M6.500 0.500v7" stroke="#66717c" stroke-width=".9"/></svg>
<span class="t" style="left:627.5px;top:65.0px;font-size:7.3px;line-height:12px;color:#222;">预览</span>
<svg class="b" style="left:22.5px;top:89.0px;" width="9" height="9" viewBox="0 0 9 9" fill="none"><rect x="0.500" y="0.500" width="8" height="8" rx="1.500" fill="#7a58ac"/><path d="M3.300 2.500l3 2-3 2z" fill="#fff"/></svg>
<span class="t" style="left:34.0px;top:88.0px;font-size:7.7px;line-height:12px;color:#1f1f1f;">视频</span>
<svg class="b" style="left:103.0px;top:90.0px;" width="6" height="7" viewBox="0 0 6 7" fill="none"><path d="M3.500 0.500l2 2-1 .5-.5 2-3-3 2-.5z" fill="#666"/><path d="M2.500 4l-2 2.500" stroke="#666" stroke-width=".8"/></svg>
<svg class="b" style="left:22.6px;top:109.4px;" width="9.9" height="8.2" viewBox="0 0 9.9 8.2" fill="none"><g transform="scale(0.9,0.82)"><path d="M0.500 1.500a1 1 0 0 1 1-1h2.500l1.200 1.300h4.300a1 1 0 0 1 1 1v5.700a1 1 0 0 1-1 1h-8a1 1 0 0 1-1-1z" fill="#f7c64b"/><path d="M0.500 3.300h10v5.200a1 1 0 0 1-1 1h-8a1 1 0 0 1-1-1z" fill="#fbd971"/></g></svg>
<span class="t" style="left:34.0px;top:108.0px;font-size:7.7px;line-height:12px;color:#1f1f1f;">周报</span>
<svg class="b" style="left:103.0px;top:110.0px;" width="6" height="7" viewBox="0 0 6 7" fill="none"><path d="M3.500 0.500l2 2-1 .5-.5 2-3-3 2-.5z" fill="#666"/><path d="M2.500 4l-2 2.500" stroke="#666" stroke-width=".8"/></svg>
<svg class="b" style="left:22.6px;top:129.4px;" width="9.9" height="8.2" viewBox="0 0 9.9 8.2" fill="none"><g transform="scale(0.9,0.82)"><path d="M0.500 1.500a1 1 0 0 1 1-1h2.500l1.200 1.300h4.300a1 1 0 0 1 1 1v5.700a1 1 0 0 1-1 1h-8a1 1 0 0 1-1-1z" fill="#f7c64b"/><path d="M0.500 3.300h10v5.200a1 1 0 0 1-1 1h-8a1 1 0 0 1-1-1z" fill="#fbd971"/></g></svg>
<span class="t" style="left:34.0px;top:128.0px;font-size:7.7px;line-height:12px;color:#1f1f1f;">RobotSLAM控标参数</span>
<svg class="b" style="left:22.6px;top:149.4px;" width="9.9" height="8.2" viewBox="0 0 9.9 8.2" fill="none"><g transform="scale(0.9,0.82)"><path d="M0.500 1.500a1 1 0 0 1 1-1h2.500l1.200 1.300h4.300a1 1 0 0 1 1 1v5.700a1 1 0 0 1-1 1h-8a1 1 0 0 1-1-1z" fill="#f7c64b"/><path d="M0.500 3.300h10v5.200a1 1 0 0 1-1 1h-8a1 1 0 0 1-1-1z" fill="#fbd971"/></g></svg>
<span class="t" style="left:34.0px;top:148.0px;font-size:7.7px;line-height:12px;color:#1f1f1f;">Z项目数据</span>
<svg class="b" style="left:22.6px;top:169.4px;" width="9.9" height="8.2" viewBox="0 0 9.9 8.2" fill="none"><g transform="scale(0.9,0.82)"><path d="M0.500 1.500a1 1 0 0 1 1-1h2.500l1.200 1.300h4.300a1 1 0 0 1 1 1v5.700a1 1 0 0 1-1 1h-8a1 1 0 0 1-1-1z" fill="#f7c64b"/><path d="M0.500 3.300h10v5.200a1 1 0 0 1-1 1h-8a1 1 0 0 1-1-1z" fill="#fbd971"/></g></svg>
<span class="t" style="left:34.0px;top:168.0px;font-size:7.7px;line-height:12px;color:#1f1f1f;">G资料</span>
<svg class="b" style="left:22.6px;top:189.4px;" width="9.9" height="8.2" viewBox="0 0 9.9 8.2" fill="none"><g transform="scale(0.9,0.82)"><path d="M0.500 1.500a1 1 0 0 1 1-1h2.500l1.200 1.300h4.300a1 1 0 0 1 1 1v5.700a1 1 0 0 1-1 1h-8a1 1 0 0 1-1-1z" fill="#f7c64b"/><path d="M0.500 3.300h10v5.200a1 1 0 0 1-1 1h-8a1 1 0 0 1-1-1z" fill="#fbd971"/></g></svg>
<span class="t" style="left:34.0px;top:188.0px;font-size:7.7px;line-height:12px;color:#1f1f1f;">8-用户手册</span>
<div class="b" style="left:10.0px;top:214.0px;width:99.0px;height:0.8px;background:#e2e4e6;"></div>
<div class="b" style="left:0.5px;top:303.5px;width:111.5px;height:19.5px;background:#dcdddf;border-radius:0 2px 2px 0"></div>
<svg class="b" style="left:8.0px;top:231.5px;" width="6" height="4" viewBox="0 0 6 4" fill="none"><path d="M0.500 0.500l2.500 2.500 2.500-2.500" stroke="#444" stroke-width=".9"/></svg>
<svg class="b" style="left:22.0px;top:229.5px;" width="10" height="8" viewBox="0 0 10 8" fill="none"><rect x="0.500" y="0.500" width="9" height="5.500" rx=".8" fill="#5aa0d8" stroke="#3b78b0" stroke-width=".7"/><path d="M3 7.500h4" stroke="#5a6a78" stroke-width=".9"/></svg>
<span class="t" style="left:34.5px;top:228.0px;font-size:7.7px;line-height:12px;color:#1f1f1f;">此电脑</span>
<svg class="b" style="left:13.5px;top:250.5px;" width="4" height="6" viewBox="0 0 4 6" fill="none"><path d="M0.800 0.500l2.500 2.500-2.500 2.500" stroke="#666" stroke-width=".8"/></svg>
<svg class="b" style="left:26.0px;top:249.5px;" width="10" height="8" viewBox="0 0 10 8" fill="none"><rect x="0.500" y="4" width="9" height="3" rx=".8" fill="#5b6670"/><path d="M1 3.500l1.500-3h3l1.500 3z" fill="#3b8ad8"/></svg>
<span class="t" style="left:39.5px;top:248.0px;font-size:7.7px;line-height:12px;color:#1f1f1f;">System (C:)</span>
<svg class="b" style="left:13.5px;top:270.5px;" width="4" height="6" viewBox="0 0 4 6" fill="none"><path d="M0.800 0.500l2.500 2.500-2.500 2.500" stroke="#666" stroke-width=".8"/></svg>
<svg class="b" style="left:26.0px;top:269.5px;" width="10" height="8" viewBox="0 0 10 8" fill="none"><rect x="0.500" y="3" width="9" height="3" rx=".8" fill="#5b6670"/></svg>
<span class="t" style="left:39.5px;top:268.0px;font-size:7.7px;line-height:12px;color:#1f1f1f;">Softwares (D:)</span>
<svg class="b" style="left:13.5px;top:290.5px;" width="4" height="6" viewBox="0 0 4 6" fill="none"><path d="M0.800 0.500l2.500 2.500-2.500 2.500" stroke="#666" stroke-width=".8"/></svg>
<svg class="b" style="left:26.0px;top:289.5px;" width="10" height="8" viewBox="0 0 10 8" fill="none"><rect x="0.500" y="3" width="9" height="3" rx=".8" fill="#5b6670"/></svg>
<span class="t" style="left:39.5px;top:288.0px;font-size:7.7px;line-height:12px;color:#1f1f1f;">File (E:)</span>
<svg class="b" style="left:13.5px;top:310.5px;" width="4" height="6" viewBox="0 0 4 6" fill="none"><path d="M0.800 0.500l2.500 2.500-2.500 2.500" stroke="#666" stroke-width=".8"/></svg>
<svg class="b" style="left:26.0px;top:309.5px;" width="10" height="8" viewBox="0 0 10 8" fill="none"><rect x="0.500" y="3" width="9" height="3" rx=".8" fill="#5b6670"/></svg>
<span class="t" style="left:39.5px;top:308.0px;font-size:7.7px;line-height:12px;color:#1f1f1f;">Work (F:)</span>
<svg class="b" style="left:13.5px;top:330.5px;" width="4" height="6" viewBox="0 0 4 6" fill="none"><path d="M0.800 0.500l2.500 2.500-2.500 2.500" stroke="#666" stroke-width=".8"/></svg>
<svg class="b" style="left:26.0px;top:329.5px;" width="10" height="8" viewBox="0 0 10 8" fill="none"><rect x="0.500" y="3" width="9" height="3" rx=".8" fill="#5b6670"/></svg>
<span class="t" style="left:39.5px;top:328.0px;font-size:7.7px;line-height:12px;color:#1f1f1f;">Database (H:)</span>
<svg class="b" style="left:9.5px;top:350.5px;" width="4" height="6" viewBox="0 0 4 6" fill="none"><path d="M0.800 0.500l2.500 2.500-2.500 2.500" stroke="#666" stroke-width=".8"/></svg>
<svg class="b" style="left:22.0px;top:349.5px;" width="10" height="8" viewBox="0 0 10 8" fill="none"><rect x="0.500" y="0.500" width="6" height="4.500" fill="#6aa6d8" stroke="#4a7aa8" stroke-width=".6"/><rect x="3.500" y="3" width="6" height="4.500" fill="#8abce6" stroke="#4a7aa8" stroke-width=".6"/></svg>
<span class="t" style="left:34.5px;top:348.0px;font-size:7.7px;line-height:12px;color:#1f1f1f;">网络</span>
<svg class="b" style="left:9.5px;top:370.5px;" width="4" height="6" viewBox="0 0 4 6" fill="none"><path d="M0.800 0.500l2.500 2.500-2.500 2.500" stroke="#666" stroke-width=".8"/></svg>
<svg class="b" style="left:23.0px;top:369.0px;" width="8" height="9" viewBox="0 0 8 9" fill="none"><path d="M4 0.500c1.500 0 2 1.500 2 3 1 1.500 1.500 3 1.500 5h-7c0-2 .5-3.500 1.500-5 0-1.500.5-3 2-3z" fill="#222"/><path d="M4 4c1 1 1.500 2.500 1.500 4h-3c0-1.500.5-3 1.500-4z" fill="#fff"/><path d="M0.500 8.500h2.500M5 8.500h2.500" stroke="#e8a020" stroke-width="1"/></svg>
<span class="t" style="left:34.5px;top:368.0px;font-size:7.7px;line-height:12px;color:#1f1f1f;">Linux</span>
<div class="b" style="left:115.5px;top:203.5px;width:2.0px;height:198.5px;background:#b4b6b8;border-radius:1px"></div>
<span class="t" style="left:143.0px;top:88.0px;font-size:7.5px;line-height:12px;color:#6a7480;">名称</span>
<svg class="b" style="left:277.5px;top:85.0px;" width="5" height="3" viewBox="0 0 5 3" fill="none"><path d="M0.500 2.500l2-2 2 2" stroke="#888" stroke-width=".7"/></svg>
<span class="t" style="left:424.0px;top:88.0px;font-size:7.5px;line-height:12px;color:#6a7480;">修改日期</span>
<span class="t" style="left:581.0px;top:88.0px;font-size:7.5px;line-height:12px;color:#6a7480;">类型</span>
<div class="b" style="left:132.5px;top:105.0px;width:513.0px;height:299.0px;background:#e1ecf4;"></div>
<div class="b" style="left:132.5px;top:105.1px;width:513.0px;height:14.4px;background:#cce4f7;box-shadow:0 0 0 0.700px #94b6d0"></div>
<svg class="b" style="left:136.6px;top:108.8px;" width="8.415" height="6.97" viewBox="0 0 8.415 6.97" fill="none"><g transform="scale(0.765,0.697)"><path d="M0.500 1.500a1 1 0 0 1 1-1h2.500l1.200 1.300h4.300a1 1 0 0 1 1 1v5.700a1 1 0 0 1-1 1h-8a1 1 0 0 1-1-1z" fill="#f7c64b"/><path d="M0.500 3.300h10v5.200a1 1 0 0 1-1 1h-8a1 1 0 0 1-1-1z" fill="#fbd971"/></g></svg>
<span class="t" style="left:147.5px;top:107.0px;font-size:7.9px;line-height:12px;color:#1c1c1c;">0513dhdcyf001.sls</span>
<span class="t" style="left:424.0px;top:107.0px;font-size:7.8px;line-height:12px;color:#333;">2023-8-29 10:13</span>
<span class="t" style="left:581.0px;top:108.0px;font-size:7.5px;line-height:12px;color:#333;">文件夹</span>
<div class="b" style="left:132.5px;top:122.6px;width:513.0px;height:14.4px;background:#cce4f7;box-shadow:0 0 0 0.700px #94b6d0"></div>
<svg class="b" style="left:136.6px;top:126.3px;" width="8.415" height="6.97" viewBox="0 0 8.415 6.97" fill="none"><g transform="scale(0.765,0.697)"><path d="M0.500 1.500a1 1 0 0 1 1-1h2.500l1.200 1.300h4.300a1 1 0 0 1 1 1v5.700a1 1 0 0 1-1 1h-8a1 1 0 0 1-1-1z" fill="#f7c64b"/><path d="M0.500 3.300h10v5.200a1 1 0 0 1-1 1h-8a1 1 0 0 1-1-1z" fill="#fbd971"/></g></svg>
<span class="t" style="left:147.5px;top:125.0px;font-size:7.9px;line-height:12px;color:#1c1c1c;">0513dhdcyf002.sls</span>
<span class="t" style="left:424.0px;top:125.0px;font-size:7.8px;line-height:12px;color:#333;">2023-8-29 10:13</span>
<span class="t" style="left:581.0px;top:125.0px;font-size:7.5px;line-height:12px;color:#333;">文件夹</span>
<div class="b" style="left:132.5px;top:140.0px;width:513.0px;height:14.4px;background:#cce4f7;box-shadow:0 0 0 0.700px #94b6d0"></div>
<svg class="b" style="left:136.6px;top:143.8px;" width="8.415" height="6.97" viewBox="0 0 8.415 6.97" fill="none"><g transform="scale(0.765,0.697)"><path d="M0.500 1.500a1 1 0 0 1 1-1h2.500l1.200 1.300h4.300a1 1 0 0 1 1 1v5.700a1 1 0 0 1-1 1h-8a1 1 0 0 1-1-1z" fill="#f7c64b"/><path d="M0.500 3.300h10v5.200a1 1 0 0 1-1 1h-8a1 1 0 0 1-1-1z" fill="#fbd971"/></g></svg>
<span class="t" style="left:147.5px;top:142.0px;font-size:7.9px;line-height:12px;color:#1c1c1c;">0513dhdcyf003.sls</span>
<span class="t" style="left:424.0px;top:142.0px;font-size:7.8px;line-height:12px;color:#333;">2023-8-29 10:13</span>
<span class="t" style="left:581.0px;top:143.0px;font-size:7.5px;line-height:12px;color:#333;">文件夹</span>
<div class="b" style="left:132.5px;top:157.5px;width:513.0px;height:14.4px;background:#cce4f7;box-shadow:0 0 0 0.700px #94b6d0"></div>
<svg class="b" style="left:136.6px;top:161.2px;" width="8.415" height="6.97" viewBox="0 0 8.415 6.97" fill="none"><g transform="scale(0.765,0.697)"><path d="M0.500 1.500a1 1 0 0 1 1-1h2.500l1.200 1.300h4.300a1 1 0 0 1 1 1v5.700a1 1 0 0 1-1 1h-8a1 1 0 0 1-1-1z" fill="#f7c64b"/><path d="M0.500 3.300h10v5.200a1 1 0 0 1-1 1h-8a1 1 0 0 1-1-1z" fill="#fbd971"/></g></svg>
<span class="t" style="left:147.5px;top:160.0px;font-size:7.9px;line-height:12px;color:#1c1c1c;">0513dhdcyf004.sls</span>
<span class="t" style="left:424.0px;top:160.0px;font-size:7.8px;line-height:12px;color:#333;">2023-8-29 10:13</span>
<span class="t" style="left:581.0px;top:160.0px;font-size:7.5px;line-height:12px;color:#333;">文件夹</span>
<div class="b" style="left:132.5px;top:175.0px;width:513.0px;height:14.4px;background:#cce4f7;box-shadow:0 0 0 0.700px #94b6d0"></div>
<svg class="b" style="left:136.6px;top:178.7px;" width="8.415" height="6.97" viewBox="0 0 8.415 6.97" fill="none"><g transform="scale(0.765,0.697)"><path d="M0.500 1.500a1 1 0 0 1 1-1h2.500l1.200 1.300h4.300a1 1 0 0 1 1 1v5.700a1 1 0 0 1-1 1h-8a1 1 0 0 1-1-1z" fill="#f7c64b"/><path d="M0.500 3.300h10v5.200a1 1 0 0 1-1 1h-8a1 1 0 0 1-1-1z" fill="#fbd971"/></g></svg>
<span class="t" style="left:147.5px;top:177.0px;font-size:7.9px;line-height:12px;color:#1c1c1c;">0513dhdcyf005.sls</span>
<span class="t" style="left:424.0px;top:177.0px;font-size:7.8px;line-height:12px;color:#333;">2023-8-29 10:13</span>
<span class="t" style="left:581.0px;top:178.0px;font-size:7.5px;line-height:12px;color:#333;">文件夹</span>
<div class="b" style="left:132.5px;top:192.4px;width:513.0px;height:14.4px;background:#cce4f7;box-shadow:0 0 0 0.700px #94b6d0"></div>
<svg class="b" style="left:136.6px;top:196.2px;" width="8.415" height="6.97" viewBox="0 0 8.415 6.97" fill="none"><g transform="scale(0.765,0.697)"><path d="M0.500 1.500a1 1 0 0 1 1-1h2.500l1.200 1.300h4.300a1 1 0 0 1 1 1v5.700a1 1 0 0 1-1 1h-8a1 1 0 0 1-1-1z" fill="#f7c64b"/><path d="M0.500 3.300h10v5.200a1 1 0 0 1-1 1h-8a1 1 0 0 1-1-1z" fill="#fbd971"/></g></svg>
<span class="t" style="left:147.5px;top:195.0px;font-size:7.9px;line-height:12px;color:#1c1c1c;">0513dhdcyf006.sls</span>
<span class="t" style="left:424.0px;top:195.0px;font-size:7.8px;line-height:12px;color:#333;">2023-8-29 10:13</span>
<span class="t" style="left:581.0px;top:195.0px;font-size:7.5px;line-height:12px;color:#333;">文件夹</span>
<div class="b" style="left:132.5px;top:209.9px;width:513.0px;height:14.4px;background:#cce4f7;box-shadow:0 0 0 0.700px #94b6d0"></div>
<svg class="b" style="left:136.6px;top:213.6px;" width="8.415" height="6.97" viewBox="0 0 8.415 6.97" fill="none"><g transform="scale(0.765,0.697)"><path d="M0.500 1.500a1 1 0 0 1 1-1h2.500l1.200 1.300h4.300a1 1 0 0 1 1 1v5.700a1 1 0 0 1-1 1h-8a1 1 0 0 1-1-1z" fill="#f7c64b"/><path d="M0.500 3.300h10v5.200a1 1 0 0 1-1 1h-8a1 1 0 0 1-1-1z" fill="#fbd971"/></g></svg>
<span class="t" style="left:147.5px;top:212.0px;font-size:7.9px;line-height:12px;color:#1c1c1c;">0513dhdcyf007.sls</span>
<span class="t" style="left:424.0px;top:212.0px;font-size:7.8px;line-height:12px;color:#333;">2023-8-29 10:13</span>
<span class="t" style="left:581.0px;top:213.0px;font-size:7.5px;line-height:12px;color:#333;">文件夹</span>
<div class="b" style="left:132.5px;top:227.4px;width:513.0px;height:14.4px;background:#cce4f7;box-shadow:0 0 0 0.700px #94b6d0"></div>
<svg class="b" style="left:136.6px;top:231.1px;" width="8.415" height="6.97" viewBox="0 0 8.415 6.97" fill="none"><g transform="scale(0.765,0.697)"><path d="M0.500 1.500a1 1 0 0 1 1-1h2.500l1.200 1.300h4.300a1 1 0 0 1 1 1v5.700a1 1 0 0 1-1 1h-8a1 1 0 0 1-1-1z" fill="#f7c64b"/><path d="M0.500 3.300h10v5.200a1 1 0 0 1-1 1h-8a1 1 0 0 1-1-1z" fill="#fbd971"/></g></svg>
<span class="t" style="left:147.5px;top:229.0px;font-size:7.9px;line-height:12px;color:#1c1c1c;">0513dhdcyf008.sls</span>
<span class="t" style="left:424.0px;top:229.0px;font-size:7.8px;line-height:12px;color:#333;">2023-8-29 10:13</span>
<span class="t" style="left:581.0px;top:230.0px;font-size:7.5px;line-height:12px;color:#333;">文件夹</span>
<div class="b" style="left:132.5px;top:244.9px;width:513.0px;height:14.4px;background:#cce4f7;box-shadow:0 0 0 0.700px #94b6d0"></div>
<svg class="b" style="left:136.6px;top:248.6px;" width="8.415" height="6.97" viewBox="0 0 8.415 6.97" fill="none"><g transform="scale(0.765,0.697)"><path d="M0.500 1.500a1 1 0 0 1 1-1h2.500l1.200 1.300h4.300a1 1 0 0 1 1 1v5.700a1 1 0 0 1-1 1h-8a1 1 0 0 1-1-1z" fill="#f7c64b"/><path d="M0.500 3.300h10v5.200a1 1 0 0 1-1 1h-8a1 1 0 0 1-1-1z" fill="#fbd971"/></g></svg>
<span class="t" style="left:147.5px;top:247.0px;font-size:7.9px;line-height:12px;color:#1c1c1c;">0513dhdcyf009.sls</span>
<span class="t" style="left:424.0px;top:247.0px;font-size:7.8px;line-height:12px;color:#333;">2023-8-29 10:13</span>
<span class="t" style="left:581.0px;top:248.0px;font-size:7.5px;line-height:12px;color:#333;">文件夹</span>
<div class="b" style="left:132.5px;top:262.3px;width:513.0px;height:14.4px;background:#cce4f7;box-shadow:0 0 0 0.700px #94b6d0"></div>
<svg class="b" style="left:136.6px;top:266.0px;" width="8.415" height="6.97" viewBox="0 0 8.415 6.97" fill="none"><g transform="scale(0.765,0.697)"><path d="M0.500 1.500a1 1 0 0 1 1-1h2.500l1.200 1.300h4.300a1 1 0 0 1 1 1v5.700a1 1 0 0 1-1 1h-8a1 1 0 0 1-1-1z" fill="#f7c64b"/><path d="M0.500 3.300h10v5.200a1 1 0 0 1-1 1h-8a1 1 0 0 1-1-1z" fill="#fbd971"/></g></svg>
<span class="t" style="left:147.5px;top:264.0px;font-size:7.9px;line-height:12px;color:#1c1c1c;">0513dhdcyf010.sls</span>
<span class="t" style="left:424.0px;top:264.0px;font-size:7.8px;line-height:12px;color:#333;">2023-8-29 10:14</span>
<span class="t" style="left:581.0px;top:265.0px;font-size:7.5px;line-height:12px;color:#333;">文件夹</span>
<div class="b" style="left:132.5px;top:279.8px;width:513.0px;height:14.4px;background:#cce4f7;box-shadow:0 0 0 0.700px #94b6d0"></div>
<svg class="b" style="left:136.6px;top:283.5px;" width="8.415" height="6.97" viewBox="0 0 8.415 6.97" fill="none"><g transform="scale(0.765,0.697)"><path d="M0.500 1.500a1 1 0 0 1 1-1h2.500l1.200 1.300h4.300a1 1 0 0 1 1 1v5.700a1 1 0 0 1-1 1h-8a1 1 0 0 1-1-1z" fill="#f7c64b"/><path d="M0.500 3.300h10v5.200a1 1 0 0 1-1 1h-8a1 1 0 0 1-1-1z" fill="#fbd971"/></g></svg>
<span class="t" style="left:147.5px;top:282.0px;font-size:7.9px;line-height:12px;color:#1c1c1c;">0513dhdcyf011.sls</span>
<span class="t" style="left:424.0px;top:282.0px;font-size:7.8px;line-height:12px;color:#333;">2023-8-29 10:14</span>
<span class="t" style="left:581.0px;top:282.0px;font-size:7.5px;line-height:12px;color:#333;">文件夹</span>
<div class="b" style="left:132.5px;top:297.3px;width:513.0px;height:14.4px;background:#cce4f7;box-shadow:0 0 0 0.700px #94b6d0"></div>
<svg class="b" style="left:136.6px;top:301.0px;" width="8.415" height="6.97" viewBox="0 0 8.415 6.97" fill="none"><g transform="scale(0.765,0.697)"><path d="M0.500 1.500a1 1 0 0 1 1-1h2.500l1.200 1.300h4.300a1 1 0 0 1 1 1v5.700a1 1 0 0 1-1 1h-8a1 1 0 0 1-1-1z" fill="#f7c64b"/><path d="M0.500 3.300h10v5.200a1 1 0 0 1-1 1h-8a1 1 0 0 1-1-1z" fill="#fbd971"/></g></svg>
<span class="t" style="left:147.5px;top:299.0px;font-size:7.9px;line-height:12px;color:#1c1c1c;">0513dhdcyf012.sls</span>
<span class="t" style="left:424.0px;top:299.0px;font-size:7.8px;line-height:12px;color:#333;">2023-8-29 10:14</span>
<span class="t" style="left:581.0px;top:300.0px;font-size:7.5px;line-height:12px;color:#333;">文件夹</span>
<div class="b" style="left:132.5px;top:314.7px;width:513.0px;height:14.4px;background:#cce4f7;box-shadow:0 0 0 0.700px #94b6d0"></div>
<svg class="b" style="left:136.6px;top:318.5px;" width="8.415" height="6.97" viewBox="0 0 8.415 6.97" fill="none"><g transform="scale(0.765,0.697)"><path d="M0.500 1.500a1 1 0 0 1 1-1h2.500l1.200 1.300h4.300a1 1 0 0 1 1 1v5.700a1 1 0 0 1-1 1h-8a1 1 0 0 1-1-1z" fill="#f7c64b"/><path d="M0.500 3.300h10v5.200a1 1 0 0 1-1 1h-8a1 1 0 0 1-1-1z" fill="#fbd971"/></g></svg>
<span class="t" style="left:147.5px;top:317.0px;font-size:7.9px;line-height:12px;color:#1c1c1c;">0513dhdcyf013.sls</span>
<span class="t" style="left:424.0px;top:317.0px;font-size:7.8px;line-height:12px;color:#333;">2023-8-29 10:14</span>
<span class="t" style="left:581.0px;top:317.0px;font-size:7.5px;line-height:12px;color:#333;">文件夹</span>
<div class="b" style="left:132.5px;top:332.2px;width:513.0px;height:14.4px;background:#cce4f7;box-shadow:0 0 0 0.700px #94b6d0"></div>
<svg class="b" style="left:136.6px;top:335.9px;" width="8.415" height="6.97" viewBox="0 0 8.415 6.97" fill="none"><g transform="scale(0.765,0.697)"><path d="M0.500 1.500a1 1 0 0 1 1-1h2.500l1.200 1.300h4.300a1 1 0 0 1 1 1v5.700a1 1 0 0 1-1 1h-8a1 1 0 0 1-1-1z" fill="#f7c64b"/><path d="M0.500 3.300h10v5.200a1 1 0 0 1-1 1h-8a1 1 0 0 1-1-1z" fill="#fbd971"/></g></svg>
<span class="t" style="left:147.5px;top:334.0px;font-size:7.9px;line-height:12px;color:#1c1c1c;">0513dhdcyf014.sls</span>
<span class="t" style="left:424.0px;top:334.0px;font-size:7.8px;line-height:12px;color:#333;">2023-8-29 10:14</span>
<span class="t" style="left:581.0px;top:335.0px;font-size:7.5px;line-height:12px;color:#333;">文件夹</span>
<div class="b" style="left:132.5px;top:349.7px;width:513.0px;height:14.4px;background:#cce4f7;box-shadow:0 0 0 0.700px #94b6d0"></div>
<svg class="b" style="left:136.6px;top:353.4px;" width="8.415" height="6.97" viewBox="0 0 8.415 6.97" fill="none"><g transform="scale(0.765,0.697)"><path d="M0.500 1.500a1 1 0 0 1 1-1h2.500l1.200 1.300h4.300a1 1 0 0 1 1 1v5.700a1 1 0 0 1-1 1h-8a1 1 0 0 1-1-1z" fill="#f7c64b"/><path d="M0.500 3.300h10v5.200a1 1 0 0 1-1 1h-8a1 1 0 0 1-1-1z" fill="#fbd971"/></g></svg>
<span class="t" style="left:147.5px;top:352.0px;font-size:7.9px;line-height:12px;color:#1c1c1c;">0513dhdcyf015.sls</span>
<span class="t" style="left:424.0px;top:352.0px;font-size:7.8px;line-height:12px;color:#333;">2023-8-29 10:14</span>
<span class="t" style="left:581.0px;top:352.0px;font-size:7.5px;line-height:12px;color:#333;">文件夹</span>
<div class="b" style="left:132.5px;top:367.1px;width:513.0px;height:14.4px;background:#cce4f7;box-shadow:0 0 0 0.700px #94b6d0"></div>
<svg class="b" style="left:136.6px;top:370.9px;" width="8.415" height="6.97" viewBox="0 0 8.415 6.97" fill="none"><g transform="scale(0.765,0.697)"><path d="M0.500 1.500a1 1 0 0 1 1-1h2.500l1.200 1.300h4.300a1 1 0 0 1 1 1v5.700a1 1 0 0 1-1 1h-8a1 1 0 0 1-1-1z" fill="#f7c64b"/><path d="M0.500 3.300h10v5.200a1 1 0 0 1-1 1h-8a1 1 0 0 1-1-1z" fill="#fbd971"/></g></svg>
<span class="t" style="left:147.5px;top:369.0px;font-size:7.9px;line-height:12px;color:#1c1c1c;">0513dhdcyf016.sls</span>
<span class="t" style="left:424.0px;top:369.0px;font-size:7.8px;line-height:12px;color:#333;">2023-8-29 10:14</span>
<span class="t" style="left:581.0px;top:370.0px;font-size:7.5px;line-height:12px;color:#333;">文件夹</span>
<div class="b" style="left:132.5px;top:384.6px;width:513.0px;height:14.4px;background:#cce4f7;box-shadow:0 0 0 0.700px #94b6d0"></div>
<svg class="b" style="left:136.6px;top:388.3px;" width="8.415" height="6.97" viewBox="0 0 8.415 6.97" fill="none"><g transform="scale(0.765,0.697)"><path d="M0.500 1.500a1 1 0 0 1 1-1h2.500l1.200 1.300h4.300a1 1 0 0 1 1 1v5.700a1 1 0 0 1-1 1h-8a1 1 0 0 1-1-1z" fill="#f7c64b"/><path d="M0.500 3.300h10v5.200a1 1 0 0 1-1 1h-8a1 1 0 0 1-1-1z" fill="#fbd971"/></g></svg>
<span class="t" style="left:147.5px;top:387.0px;font-size:7.9px;line-height:12px;color:#1c1c1c;">0513dhdcyf017.sls</span>
<span class="t" style="left:424.0px;top:387.0px;font-size:7.8px;line-height:12px;color:#333;">2023-8-29 10:14</span>
<span class="t" style="left:581.0px;top:387.0px;font-size:7.5px;line-height:12px;color:#333;">文件夹</span>
<div class="b" style="left:132.5px;top:156.0px;width:513.0px;height:16.6px;background:transparent;border:1px solid #80766e;box-sizing:border-box"></div>
<div class="b" style="left:132.5px;top:402.0px;width:513.0px;height:2.0px;background:#b5cfe2;"></div>
<div class="b" style="left:120.0px;top:404.0px;width:535.0px;height:24.0px;background:#fff;"></div>
<div class="b" style="left:650.0px;top:95.0px;width:2.0px;height:45.0px;background:#97999b;border-radius:1px"></div>
<div class="b" style="left:134.0px;top:408.0px;width:385.0px;height:2.0px;background:#a2a4a6;border-radius:1px"></div>
<div class="b" style="left:0.0px;top:414.0px;width:656.0px;height:14.0px;background:#fafbfc;"></div>
<span class="t" style="left:8.5px;top:416.0px;font-size:7.5px;line-height:12px;color:#333;">112 个项目</span>
<span class="t" style="left:60.5px;top:416.0px;font-size:7.5px;line-height:12px;color:#333;">已选择 111 个项目</span>
<div class="b" style="left:612.0px;top:413.0px;width:20.0px;height:14.5px;background:#d5e8f5;border:1px solid #a9cde6;box-sizing:border-box;border-radius:2px"></div>
<svg class="b" style="left:617.0px;top:416.5px;" width="10" height="7" viewBox="0 0 10 7" fill="none"><path d="M0.500 1h9M0.500 3.500h9M0.500 6h9" stroke="#555" stroke-width=".8"/></svg>
<svg class="b" style="left:638.0px;top:416.5px;" width="10" height="7" viewBox="0 0 10 7" fill="none"><rect x="0.500" y="0.500" width="9" height="6" rx="1" stroke="#555" stroke-width=".8"/></svg>
</div>
<div class="b" style="left:1079.0px;top:597.5px;width:66.5px;height:16.0px;background:#f1f5f8;border-radius:2px"></div>
<div class="b" style="left:1065.0px;top:596.0px;width:18.0px;height:18.0px;background:#f2681c;border-radius:5px"></div>
<span class="t" style="left:924.0px;width:300px;text-align:center;top:596.0px;font-size:16px;line-height:18px;color:#fff;font-weight:bold;font-style:italic">S</span>
<span class="t" style="left:942.0px;width:300px;text-align:center;top:600.0px;font-size:8.5px;line-height:12px;color:#5f86ae;font-weight:bold">中</span>
<span class="t" style="left:957.5px;width:300px;text-align:center;top:599.0px;font-size:9px;line-height:12px;color:#5f86ae;font-weight:bold">°,</span>
<span class="t" style="left:972.0px;width:300px;text-align:center;top:600.0px;font-size:8.5px;line-height:12px;color:#5f86ae;font-weight:bold">全</span>
<span class="t" style="left:987.5px;width:300px;text-align:center;top:600.0px;font-size:8.5px;line-height:12px;color:#5f86ae;font-weight:bold">简</span>
</div>
</body></html>
